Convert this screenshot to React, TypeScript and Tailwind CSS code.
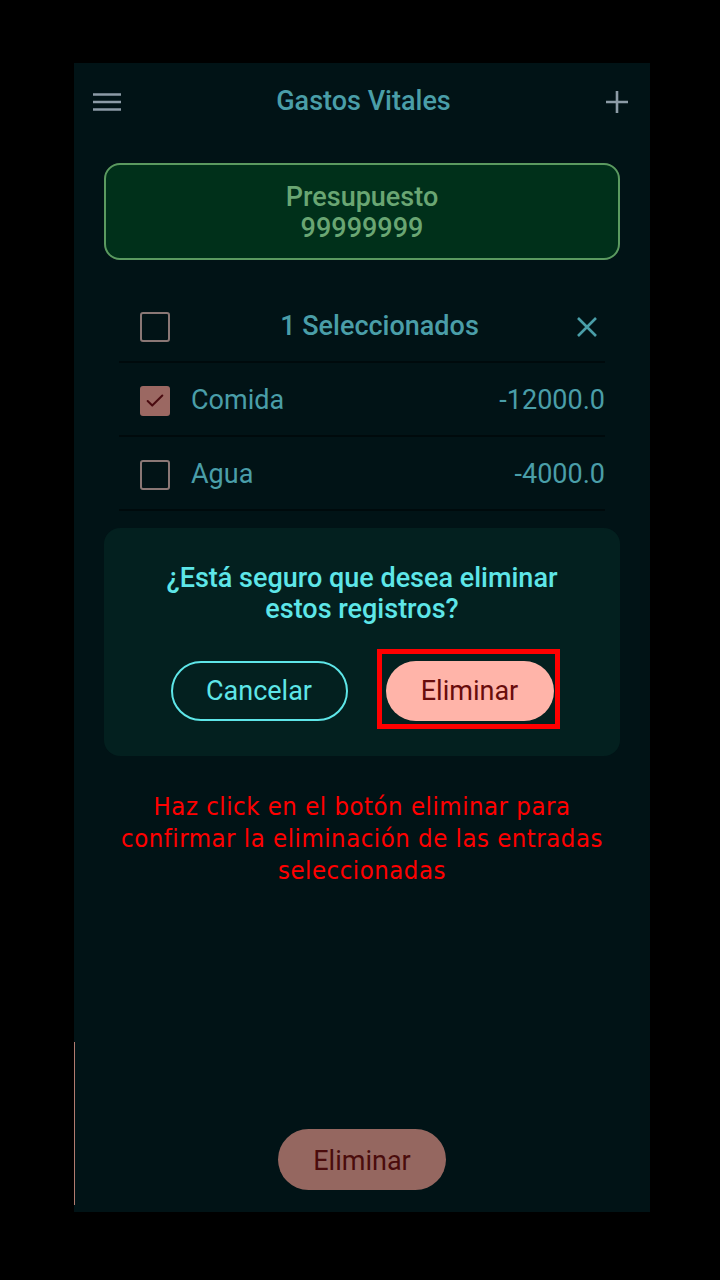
import { Check } from "lucide-react";

const rows = [
  { name: "Comida", amount: "-12000.0", checked: true },
  { name: "Agua", amount: "-4000.0", checked: false },
];

const Box = ({ checked }: { checked: boolean }) =>
  checked ? (
    <div className="w-[30px] h-[30px] rounded-[3px] bg-[#9b6862] flex items-center justify-center">
      <Check size={22} strokeWidth={2.2} className="text-[#4a0b10]" />
    </div>
  ) : (
    <div className="w-[30px] h-[30px] rounded-[3px] border-2 border-[#8a7775]" />
  );

export default function App() {
  return (
    <div className="w-[720px] h-[1280px] bg-black pt-[63px] font-['Roboto',sans-serif]">
      <div className="relative ml-[74px] w-[576px] h-[1149px] bg-[#011316] flex flex-col">
        <div className="absolute left-0 top-[979px] w-px h-[163px] bg-[#b07b70]" />

        <header className="h-[76px] flex items-center justify-between pl-[19px] pr-[22px] pt-[1px]">
          <svg width="28" height="20" viewBox="0 0 28 20" className="text-[#8c9ba6]">
            <path d="M0 2.5h28M0 10h28M0 17.5h28" stroke="currentColor" strokeWidth="2.6" />
          </svg>
          <h1 className="text-[27px] font-medium text-[#4a9ea8]">Gastos Vitales</h1>
          <svg width="22" height="22" viewBox="0 0 22 22" className="text-[#8c9ba6]">
            <path d="M11 0v22M0 11h22" stroke="currentColor" strokeWidth="2.6" />
          </svg>
        </header>

        <div className="mx-[30px] mt-[24px] h-[97px] rounded-[16px] border-2 border-[#5b9a60] bg-[#00301a] flex flex-col items-center justify-center text-[27px] font-medium leading-[31px] text-[#6aa673] pt-[2px]">
          <span>Presupuesto</span>
          <span>99999999</span>
        </div>

        <div className="mx-[45px] mt-[29px]">
          <div className="h-[74px] flex items-center pl-[21px] pr-[8px] border-b-2 border-[#000a0c] pt-[3px]">
            <Box checked={false} />
            <span className="flex-1 text-center text-[27px] font-medium text-[#4a9ea8] pl-[12px]">
              1 Seleccionados
            </span>
            <svg width="20" height="20" viewBox="0 0 20 20" className="text-[#4a9ea8]">
              <path d="M1 1l18 18M19 1L1 19" stroke="currentColor" strokeWidth="2.6" />
            </svg>
          </div>
          {rows.map((r) => (
            <div
              key={r.name}
              className="h-[74px] flex items-center pl-[21px] border-b-2 border-[#000a0c] pt-[3px]"
            >
              <Box checked={r.checked} />
              <span className="ml-[21px] flex-1 text-[27px] text-[#4a9ea8]">{r.name}</span>
              <span className="text-[27px] text-[#4a9ea8]">{r.amount}</span>
            </div>
          ))}
        </div>

        <div className="mx-[30px] mt-[17px] h-[228px] rounded-[16px] bg-[#03201f] flex flex-col items-center pt-[35px]">
          <p className="text-center text-[27px] font-medium leading-[31px] text-[#5ee6e8]">
            ¿Está seguro que desea eliminar
            <br />
            estos registros?
          </p>
          <div className="mt-[36px] flex items-center gap-[38px]">
            <button className="w-[177px] h-[60px] rounded-full border-2 border-[#5ee6e8] text-[27px] text-[#5ee6e8]">
              Cancelar
            </button>
            <div className="relative">
              <button className="w-[168px] h-[60px] rounded-full bg-[#ffb4a9] text-[27px] text-[#690c0c]">
                Eliminar
              </button>
              <div className="absolute -left-[9px] -top-[12px] w-[183px] h-[80px] border-[5px] border-[#ff0000]" />
            </div>
          </div>
        </div>

        <p className="mt-[34px] text-center text-[25.5px] leading-[32px] tracking-[0.5px] text-[#ff0000] font-['DejaVu_Sans_Condensed','DejaVu_Sans',sans-serif]">
          Haz click en el botón eliminar para
          <br />
          confirmar la eliminación de las entradas
          <br />
          seleccionadas
        </p>

        <div className="mt-auto mb-[22px] flex justify-center">
          <button className="w-[168px] h-[61px] rounded-full bg-[#956760] text-[27px] text-[#4a0c0c] pt-[3px]">
            Eliminar
          </button>
        </div>
      </div>
    </div>
  );
}
